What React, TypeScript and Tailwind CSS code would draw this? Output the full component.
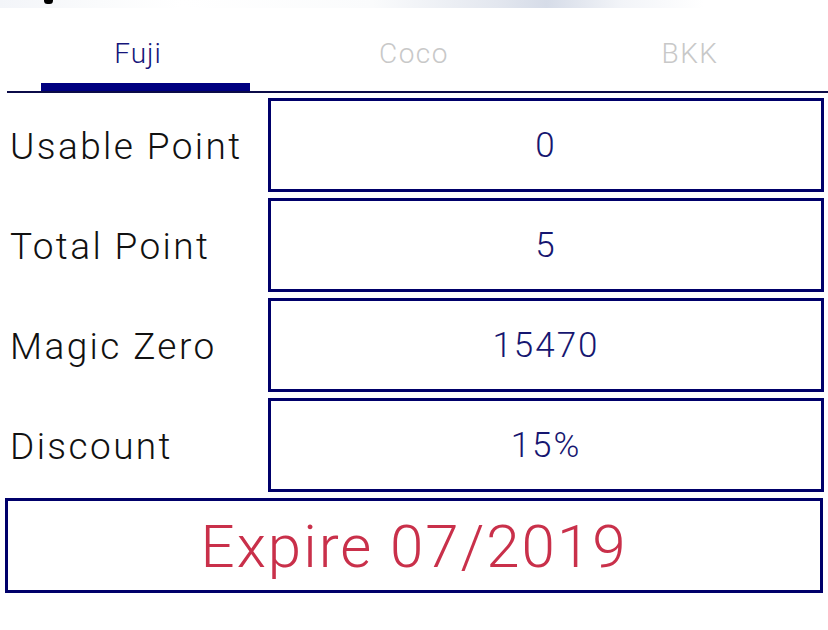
import React from "react";

const rows = [
  { label: "Usable Point", value: "0" },
  { label: "Total Point", value: "5" },
  { label: "Magic Zero", value: "15470" },
  { label: "Discount", value: "15%" },
];

export default function App() {
  return (
    <div
      className="w-[828px] h-[630px] bg-white overflow-hidden relative"
      style={{ fontFamily: "Roboto, 'Liberation Sans', sans-serif" }}
    >
      {/* blurred image fragment at top */}
      <div className="relative h-[8px] w-full bg-[linear-gradient(90deg,#f3f5f9_0%,#fafbfc_12%,#ffffff_22%,#fafbfc_45%,#e3e7ef_60%,#d6dce8_66%,#f2f4f8_75%,#ffffff_85%,#ffffff_100%)]">
        <div className="absolute left-[44px] -top-[3px] w-[9px] h-[7px] rounded-full bg-black" />
      </div>

      {/* tabs */}
      <div className="flex h-[83px]">
        <div className="flex-1 flex flex-col">
          <div className="flex-1 flex items-center justify-center pt-[16px] text-[28px] font-light tracking-[1px] text-[#15157a]">
            Fuji
          </div>
          <div className="ml-[41px] mr-[26px] h-[8px] bg-[#000080]" />
        </div>
        <div className="flex-1 flex flex-col">
          <div className="flex-1 flex items-center justify-center pt-[16px] text-[28px] font-light tracking-[1.5px] text-[#c8c8c8]">
            Coco
          </div>
          <div className="h-[8px]" />
        </div>
        <div className="flex-1 flex flex-col">
          <div className="flex-1 flex items-center justify-center pt-[16px] text-[28px] font-light tracking-[1.5px] text-[#c8c8c8]">
            BKK
          </div>
          <div className="h-[8px]" />
        </div>
      </div>
      <div className="ml-[7px] h-[2px] bg-[#0b0b48]" />

      {/* rows */}
      <div className="mt-[5px] flex flex-col gap-[6px]">
        {rows.map((r) => (
          <div key={r.label} className="flex h-[94px]">
            <div className="w-[268px] pl-[10px] pt-[4px] flex items-center text-[37px] font-light tracking-[2.4px] text-[#111111]">
              {r.label}
            </div>
            <div className="w-[556px] border-[3px] border-[#00006a] pt-[3px] flex items-center justify-center text-[35px] font-light tracking-[2px] text-[#161670]">
              {r.value}
            </div>
          </div>
        ))}
      </div>

      {/* expire */}
      <div className="mt-[6px] ml-[5px] w-[818px] h-[95px] border-[3px] border-[#00006a] pt-[2px] flex items-center justify-center text-[60px] font-light tracking-[2px] text-[#c9304a]">
        Expire 07/2019
      </div>
    </div>
  );
}
